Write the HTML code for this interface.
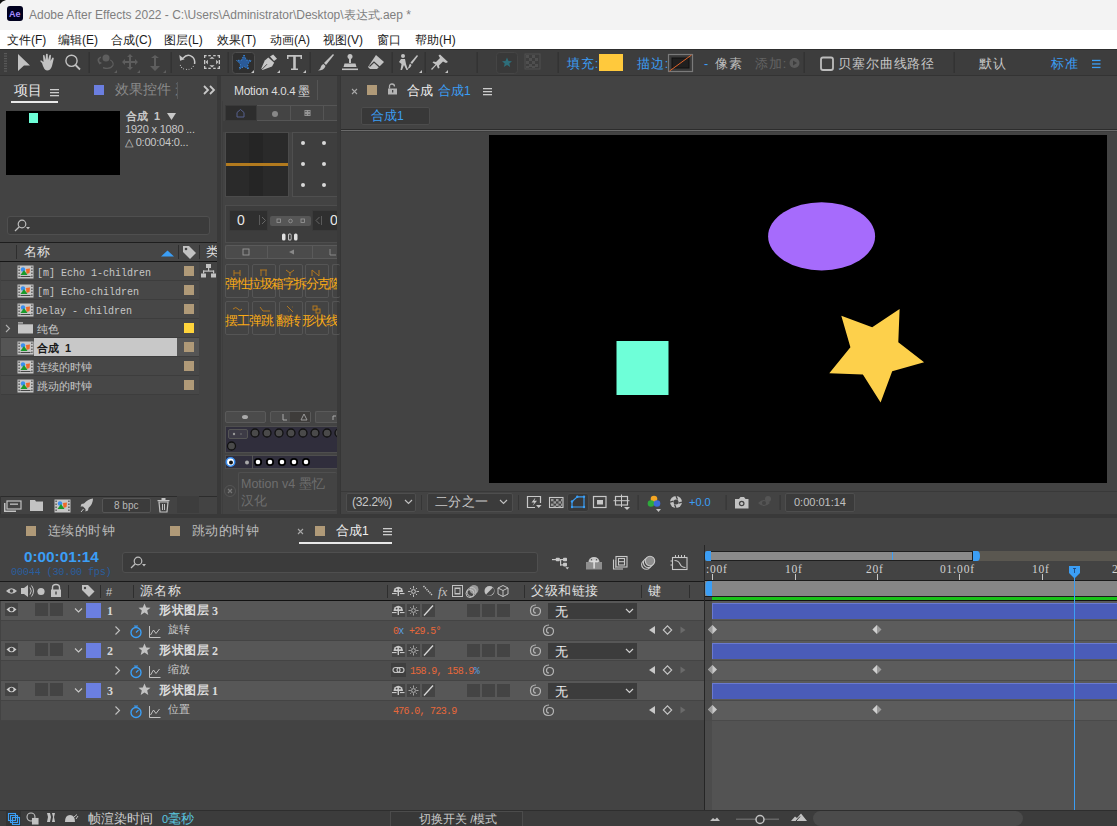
<!DOCTYPE html>
<html><head><meta charset="utf-8">
<style>
*{margin:0;padding:0;box-sizing:border-box}
html,body{width:1117px;height:826px;overflow:hidden;background:#393939;font-family:"Liberation Sans",sans-serif;}
.a{position:absolute}
.t{position:absolute;white-space:nowrap;line-height:1}
</style></head><body>
<!-- title bar -->
<div class="a" style="left:0;top:0;width:1117px;height:30px;background:#f3f3f3"></div>
<div class="a" style="left:7px;top:6px;width:16px;height:15px;background:#00001e;border-radius:3px"></div>
<div class="t" style="left:9px;top:9.5px;font-size:9px;font-weight:bold;color:#a48cff">Ae</div>
<svg class="a" style="left:0;top:0" width="8" height="5"><path d="M0,0 H6 Q2,1 0,4 Z" fill="#111"/></svg>
<div class="t" style="left:29px;top:9px;font-size:12px;color:#7f7f7f">Adobe After Effects 2022 - C:\Users\Administrator\Desktop\表达式.aep *</div>
<!-- menu bar -->
<div class="a" style="left:0;top:30px;width:1117px;height:20px;background:#ffffff"></div>
<div class="t" style="top:34px;left:7px;font-size:12px;color:#1a1a1a">文件(F)</div>
<div class="t" style="top:34px;left:58px;font-size:12px;color:#1a1a1a">编辑(E)</div>
<div class="t" style="top:34px;left:111px;font-size:12px;color:#1a1a1a">合成(C)</div>
<div class="t" style="top:34px;left:164px;font-size:12px;color:#1a1a1a">图层(L)</div>
<div class="t" style="top:34px;left:217px;font-size:12px;color:#1a1a1a">效果(T)</div>
<div class="t" style="top:34px;left:270px;font-size:12px;color:#1a1a1a">动画(A)</div>
<div class="t" style="top:34px;left:323px;font-size:12px;color:#1a1a1a">视图(V)</div>
<div class="t" style="top:34px;left:377px;font-size:12px;color:#1a1a1a">窗口</div>
<div class="t" style="top:34px;left:415px;font-size:12px;color:#1a1a1a">帮助(H)</div>
<!-- toolbar -->
<div class="a" style="left:0;top:49px;width:1117px;height:1px;background:#2e2e2e"></div>
<div class="a" style="left:0;top:50px;width:1117px;height:25px;background:#3d3d3d"></div>
<div class="a" style="left:0;top:75px;width:1117px;height:1px;background:#333"></div>
<svg class="a" style="left:0;top:50px" width="1117" height="26" viewBox="0 50 1117 26">
 <g fill="#5a5a5a"><rect x="4" y="53" width="3" height="1.2"/><rect x="4" y="55.5" width="3" height="1.2"/><rect x="4" y="58" width="3" height="1.2"/><rect x="4" y="60.5" width="3" height="1.2"/><rect x="4" y="63" width="3" height="1.2"/><rect x="4" y="65.5" width="3" height="1.2"/><rect x="4" y="68" width="3" height="1.2"/><rect x="4" y="70.5" width="3" height="1.2"/></g>
 <g fill="#c2c2c2">
  <polygon points="18,54 30,65.5 24,65.5 18,71"/>
  <path d="M42,63 L40.5,61.5 Q40,60.5 41,60.2 L43.5,62 L43,55.5 Q43.5,54.5 44.5,55.2 L45.5,60 L46,54 Q47,53.3 47.7,54 L48,60 L49.5,55 Q50.5,54.5 51,55.5 L50.5,61 L52.5,57.5 Q53.8,57.5 53.8,58.5 L52,66 Q50.5,70.5 47,70.5 Q44,70.5 42,63 Z"/>
 </g>
 <g fill="none" stroke="#c2c2c2" stroke-width="1.4"><circle cx="71.5" cy="60.8" r="5.6"/><line x1="75.5" y1="65" x2="80" y2="69.5" stroke-width="1.8"/></g>
 <g fill="#333"><rect x="88.5" y="52" width="1.5" height="21"/><rect x="170.5" y="52" width="1.5" height="21"/><rect x="227.5" y="52" width="1.5" height="21"/><rect x="309.5" y="52" width="1.5" height="21"/><rect x="391.5" y="52" width="1.5" height="21"/><rect x="424.5" y="52" width="1.5" height="21"/><rect x="476.5" y="52" width="1.5" height="21"/><rect x="557.5" y="52" width="1.5" height="21"/><rect x="803.5" y="52" width="1.5" height="21"/><rect x="953.5" y="52" width="1.5" height="21"/></g>
 <g fill="#5e5e5e" stroke="none">
  <circle cx="106" cy="58" r="3.5"/><path d="M98,62 Q96,58 101,56.5 L101,58 Q98.5,59 99.5,61.5 L102,63 L99.5,64.5 Z M103,67 Q110,69 112.5,65 Q113,62 110,60.5 L110.5,59.5 Q114.5,61.5 113.5,65.5 Q111,70.5 103,68.5 Z"/>
  <path d="M130,54 L133,57 L131,57 L131,61 L135,61 L135,59 L138,62 L135,65 L135,63 L131,63 L131,67 L133,67 L130,70 L127,67 L129,67 L129,63 L125,63 L125,65 L122,62 L125,59 L125,61 L129,61 L129,57 L127,57 Z"/>
  <path d="M155,55 L159,58 L156,58 L156,66 L160,66 L155,71 L150,66 L154,66 L154,58 L151,58 Z"/>
  <path d="M114,73 L117,70 L117,73 Z M137,73 L140,70 L140,73 Z M163,73 L166,70 L166,73 Z"/>
 </g>
 <path d="M183,58.2 Q187.5,53 192.3,56.8 Q195.3,59.5 194.6,64" fill="none" stroke="#c8c8c8" stroke-width="1.5"/>
 <polygon points="179.3,55.1 180.1,60.7 184.6,59.2" fill="#c8c8c8"/>
 <g fill="#b0b0b0"><circle cx="180.4" cy="65.4" r="0.6"/><circle cx="181.6" cy="67.4" r="0.65"/><circle cx="183.5" cy="68.8" r="0.6"/><circle cx="186.5" cy="69.4" r="0.6"/><circle cx="189" cy="69.3" r="0.55"/><circle cx="191.5" cy="68.3" r="0.65"/><circle cx="193.3" cy="66.4" r="0.6"/></g>
 <g fill="#c8c8c8">
  <rect x="204" y="55" width="2.6" height="1.3"/><rect x="204" y="55" width="1.3" height="3"/>
  <rect x="217.4" y="55" width="2.6" height="1.3"/><rect x="218.7" y="55" width="1.3" height="3"/>
  <rect x="204" y="67.7" width="2.6" height="1.3"/><rect x="204" y="66" width="1.3" height="3"/>
  <rect x="217.4" y="67.7" width="2.6" height="1.3"/><rect x="218.7" y="66" width="1.3" height="3"/>
  <rect x="208.3" y="55" width="2.5" height="1.3"/><rect x="213.2" y="55" width="2.5" height="1.3"/>
  <rect x="208.3" y="67.7" width="2.5" height="1.3"/><rect x="213.2" y="67.7" width="2.5" height="1.3"/>
  <rect x="204" y="60" width="1.3" height="4.2"/><rect x="218.7" y="60" width="1.3" height="4.2"/>
  <polygon points="212,56.8 214.6,58.8 209.4,58.8"/><polygon points="212,67.4 214.6,65.2 209.4,65.2"/>
  <polygon points="205.6,62.1 207.9,59.8 207.9,64.4"/><polygon points="218.4,62.1 216.1,59.8 216.1,64.4"/>
 </g>
 <rect x="232.5" y="52.5" width="22" height="21" rx="3" fill="#2f2f2f" stroke="#4d4d4d"/>
 <polygon points="244,55 246.3,60 251.5,60.5 247.5,64 248.7,69.3 244,66.5 239.3,69.3 240.5,64 236.5,60.5 241.7,60" fill="#2a5a98" stroke="#3f9af0" stroke-width="0.9" stroke-dasharray="1.2 1.6"/>
 <path d="M251,73 L254,70 L254,73 Z" fill="#c2c2c2"/>
 <polygon points="270,56.6 273.2,54.4 277,58.8 274,61" fill="#c8c8c8"/><polygon points="268.3,57.6 274.2,62.8 272,66.5 262.5,70 261.3,68.6 264.8,60.5" fill="#c8c8c8"/><path d="M262,69.3 L267,64.2" stroke="#3d3d3d" stroke-width="0.9"/>
 <path d="M277,73 L280,70 L280,73 Z" fill="#c2c2c2"/>
 <path d="M287,55 L302,55 L302,59 L300.5,59 L300.5,56.8 L295.8,56.8 L295.8,68.5 L298,68.5 L298,70 L291,70 L291,68.5 L293.2,68.5 L293.2,56.8 L288.5,56.8 L288.5,59 L287,59 Z" fill="#c2c2c2"/>
 <path d="M303,73 L306,70 L306,73 Z" fill="#c2c2c2"/>
 <g fill="#c2c2c2">
  <path d="M333,54 L334,55 L326,65 L324,63 Z"/><path d="M323.5,64 L325.5,66 Q324,70.5 318,70.5 Q321,68.5 321,66.5 Q321.5,64.5 323.5,64 Z"/>
  <circle cx="350" cy="56.5" r="2.5"/><rect x="349" y="58" width="2" height="5"/><path d="M344.5,63.5 L355.5,63.5 L356.5,67 L343.5,67 Z"/><rect x="342" y="68.5" width="16" height="1.6"/>
  <path d="M376,55 L384,62 L377,69 L370,69 L368,67 Z"/>
 </g>
 <path d="M369.5,66.5 L374,62 L380,67.5" stroke="#3d3d3d" stroke-width="1.2" fill="none"/>
 <g fill="#c2c2c2"><circle cx="403" cy="56" r="2"/><path d="M401,59 L405,59 L406,64 L408,70 L406.5,70 L404,65 L402,70 L400.5,70 L401.5,64 L399,62 Z"/><path d="M417,55 L418,56 L412,64 L410.5,62.5 Z"/><path d="M410,63.5 L411.5,65 Q410.5,68.5 407,69 Q409,67 409,65.5 Z"/>
 <path d="M419,73 L422,70 L422,73 Z"/>
 <path d="M440,54.5 L448,62 L446,63 L443,61.5 L439,65.5 L439.5,68 L438,68.5 L436.5,65 L432,70 L431,69 L435.5,64.5 L432.5,62.5 L433.5,61.5 L436,62 L440,58 L438.5,55.5 Z"/>
 <path d="M445,73 L448,70 L448,73 Z"/></g>
 <rect x="496.5" y="52.5" width="21" height="21" rx="3" fill="#393939" stroke="#454545"/>
 <polygon points="507,57.5 508.5,61 512,61.3 509.3,63.5 510.2,67 507,65 503.8,67 504.7,63.5 502,61.3 505.5,61" fill="#2e6e7a"/>
 <g fill="#4f4f4f"><rect x="525" y="54" width="15" height="15" fill="none" stroke="#505050" stroke-width="1"/>
 <rect x="526" y="55" width="3" height="3"/><rect x="532" y="55" width="3" height="3"/><rect x="529" y="58" width="3" height="3"/><rect x="535" y="58" width="3" height="3"/><rect x="526" y="61" width="3" height="3"/><rect x="532" y="61" width="3" height="3"/><rect x="529" y="64" width="3" height="3"/><rect x="535" y="64" width="3" height="3"/><rect x="526" y="66" width="3" height="2"/><rect x="532" y="66" width="3" height="2"/></g>
 <rect x="599" y="54" width="24" height="17" fill="#ffc93c"/>
 <rect x="668.5" y="54.5" width="24" height="17" fill="#3a3a3a" stroke="#7a7a7a" stroke-width="1.2"/>
 <rect x="672" y="58" width="17" height="10" fill="#1f1f1f" stroke="#101010"/>
 <line x1="669.5" y1="71" x2="691.5" y2="55" stroke="#e0642a" stroke-width="1"/>
 <circle cx="794.5" cy="63" r="5" fill="#5a5a5a"/><path d="M793,60.5 L797,63 L793,65.5 Z" fill="#3d3d3d"/>
 <rect x="821" y="57.5" width="12" height="12.5" rx="2" fill="none" stroke="#bdbdbd" stroke-width="1.8"/>
 <g fill="#3b9ef5"><rect x="1092" y="59.8" width="8.5" height="1.3"/><rect x="1092" y="63.3" width="8.5" height="1.3"/><rect x="1092" y="66.8" width="8.5" height="1.3"/></g>
</svg>
<div class="t" style="left:567px;top:58px;font-size:12.5px;letter-spacing:0.9px;color:#3b9ef5">填充:</div>
<div class="t" style="left:637px;top:58px;font-size:12.5px;letter-spacing:0.9px;color:#3b9ef5">描边:</div>
<div class="t" style="left:704px;top:58px;font-size:12.5px;letter-spacing:0.9px;color:#3b9ef5">-</div>
<div class="t" style="left:715px;top:58px;font-size:12.5px;letter-spacing:0.9px;color:#bdbdbd">像素</div>
<div class="t" style="left:755px;top:58px;font-size:12.5px;letter-spacing:0.9px;color:#636363">添加:</div>
<div class="t" style="left:838px;top:58px;font-size:12.5px;letter-spacing:0.9px;color:#c8c8c8">贝塞尔曲线路径</div>
<div class="t" style="left:979px;top:58px;font-size:12.5px;letter-spacing:0.9px;color:#c8c8c8">默认</div>
<div class="t" style="left:1051px;top:58px;font-size:12.5px;letter-spacing:0.9px;color:#3b9ef5">标准</div>

<!-- project panel -->
<div class="a" style="left:0;top:76px;width:217px;height:438px;background:#434343"></div>
<div class="t" style="left:14px;top:83px;font-size:14px;color:#e8e8e8">项目</div>
<svg class="a" style="left:50px;top:88px" width="9" height="9"><rect y="1" width="9" height="1.3" fill="#ccc"/><rect y="4" width="9" height="1.3" fill="#ccc"/><rect y="7" width="9" height="1.3" fill="#ccc"/></svg>
<div class="a" style="left:11px;top:101px;width:47px;height:2px;background:#e8e8e8"></div>
<div class="a" style="left:94px;top:85px;width:10px;height:10px;background:#6b7ee0"></div>
<div class="a" style="left:115px;top:83px;width:62px;height:16px;overflow:hidden"><div class="t" style="left:0;top:0;font-size:13.5px;color:#8a8a8a">效果控件 形状</div></div>
<div class="a" style="left:177px;top:82px;width:1px;height:17px;background:#5a5a5a"></div>
<svg class="a" style="left:202px;top:85px" width="14" height="10"><path d="M2,1 L6,5 L2,9 M8,1 L12,5 L8,9" stroke="#c8c8c8" stroke-width="1.8" fill="none"/></svg>
<div class="a" style="left:6px;top:111px;width:114px;height:64px;background:#000"></div>
<div class="a" style="left:29px;top:113px;width:9px;height:10px;background:#6effd8"></div>
<div class="t" style="left:126px;top:111px;font-size:11px;font-weight:bold;color:#c8c8c8">合成 &nbsp;1</div>
<svg class="a" style="left:167px;top:113px" width="9" height="7"><polygon points="0,0 9,0 4.5,7" fill="#c8c8c8"/></svg>
<div class="t" style="left:125px;top:124px;font-size:11px;color:#c8c8c8;letter-spacing:-0.2px">1920 x 1080 ...</div>
<div class="t" style="left:125px;top:137px;font-size:11px;color:#c8c8c8;letter-spacing:-0.2px">△ 0:00:04:0...</div>
<div class="a" style="left:7px;top:216px;width:203px;height:19px;background:#3b3b3b;border:1px solid #4f4f4f;border-radius:3px"></div>
<svg class="a" style="left:13px;top:219px" width="20" height="14"><circle cx="9" cy="5" r="3.8" stroke="#bdbdbd" stroke-width="1.2" fill="none"/><line x1="6.3" y1="7.8" x2="2" y2="12" stroke="#bdbdbd" stroke-width="1.3"/><polygon points="13,8 17,8 15,10.5" fill="#bdbdbd"/></svg>
<div class="a" style="left:0;top:242px;width:217px;height:1px;background:#1e1e1e"></div>
<div class="a" style="left:0;top:243px;width:199px;height:18px;background:#464646"></div>
<div class="a" style="left:16px;top:245px;width:1px;height:14px;background:#2e2e2e"></div>
<div class="t" style="left:24px;top:245px;font-size:13px;color:#e0e0e0">名称</div>
<svg class="a" style="left:161px;top:250px" width="13" height="7"><polygon points="0,6.5 6.5,0.5 13,6.5" fill="#3b9ef5"/></svg>
<div class="a" style="left:178px;top:245px;width:1px;height:14px;background:#2e2e2e"></div>
<svg class="a" style="left:182px;top:245px" width="15" height="14"><path d="M1,1 L7,1 L14,8 L8,14 L1,7 Z" fill="#c2c2c2"/><circle cx="4" cy="4" r="1.3" fill="#464646"/></svg>
<div class="a" style="left:199px;top:245px;width:1px;height:14px;background:#2e2e2e"></div>
<div class="a" style="left:203px;top:244px;width:14px;height:17px;overflow:hidden"><div class="t" style="left:3px;top:1px;font-size:13px;color:#e0e0e0">类型</div></div>
<div class="a" style="left:0;top:261px;width:217px;height:1px;background:#161616"></div>
<div class="a" style="left:1px;top:262px;width:198px;height:133px;background:#3d3d3d"></div>
<div class="a" style="left:1px;top:262px;width:198px;height:18px;background:#474747"></div>
<svg class="a" style="left:17px;top:265px" width="17" height="14" viewBox="0 0 17 14"><rect x="0.5" y="0.5" width="16" height="13" fill="#c6c6c6"/><g fill="#454545"><rect x="1.5" y="1.5" width="1.2" height="1.5"/><rect x="1.5" y="4.5" width="1.2" height="1.5"/><rect x="1.5" y="7.5" width="1.2" height="1.5"/><rect x="1.5" y="10.5" width="1.2" height="1.5"/><rect x="14.3" y="1.5" width="1.2" height="1.5"/><rect x="14.3" y="4.5" width="1.2" height="1.5"/><rect x="14.3" y="7.5" width="1.2" height="1.5"/><rect x="14.3" y="10.5" width="1.2" height="1.5"/><rect x="3.5" y="11" width="10" height="1"/></g><polygon points="9,4 13,3.5 12.5,8 9.5,9" fill="#f06a2a"/><circle cx="6" cy="4.5" r="2.2" fill="#3a8ef0"/><polygon points="7,5 10.5,10 3.5,10" fill="#1a9a2a"/></svg>
<div class="a" style="left:184px;top:266px;width:10px;height:10px;background:#b09a78"></div>
<div class="t" style="left:37px;top:269px;font-family:'Liberation Mono',monospace;font-size:10px;color:#c8c8c8">[m] Echo 1-children</div>
<div class="a" style="left:1px;top:281px;width:198px;height:18px;background:#474747"></div>
<svg class="a" style="left:17px;top:284px" width="17" height="14" viewBox="0 0 17 14"><rect x="0.5" y="0.5" width="16" height="13" fill="#c6c6c6"/><g fill="#454545"><rect x="1.5" y="1.5" width="1.2" height="1.5"/><rect x="1.5" y="4.5" width="1.2" height="1.5"/><rect x="1.5" y="7.5" width="1.2" height="1.5"/><rect x="1.5" y="10.5" width="1.2" height="1.5"/><rect x="14.3" y="1.5" width="1.2" height="1.5"/><rect x="14.3" y="4.5" width="1.2" height="1.5"/><rect x="14.3" y="7.5" width="1.2" height="1.5"/><rect x="14.3" y="10.5" width="1.2" height="1.5"/><rect x="3.5" y="11" width="10" height="1"/></g><polygon points="9,4 13,3.5 12.5,8 9.5,9" fill="#f06a2a"/><circle cx="6" cy="4.5" r="2.2" fill="#3a8ef0"/><polygon points="7,5 10.5,10 3.5,10" fill="#1a9a2a"/></svg>
<div class="a" style="left:184px;top:285px;width:10px;height:10px;background:#b09a78"></div>
<div class="t" style="left:37px;top:288px;font-family:'Liberation Mono',monospace;font-size:10px;color:#c8c8c8">[m] Echo-children</div>
<div class="a" style="left:1px;top:300px;width:198px;height:18px;background:#474747"></div>
<svg class="a" style="left:17px;top:303px" width="17" height="14" viewBox="0 0 17 14"><rect x="0.5" y="0.5" width="16" height="13" fill="#c6c6c6"/><g fill="#454545"><rect x="1.5" y="1.5" width="1.2" height="1.5"/><rect x="1.5" y="4.5" width="1.2" height="1.5"/><rect x="1.5" y="7.5" width="1.2" height="1.5"/><rect x="1.5" y="10.5" width="1.2" height="1.5"/><rect x="14.3" y="1.5" width="1.2" height="1.5"/><rect x="14.3" y="4.5" width="1.2" height="1.5"/><rect x="14.3" y="7.5" width="1.2" height="1.5"/><rect x="14.3" y="10.5" width="1.2" height="1.5"/><rect x="3.5" y="11" width="10" height="1"/></g><polygon points="9,4 13,3.5 12.5,8 9.5,9" fill="#f06a2a"/><circle cx="6" cy="4.5" r="2.2" fill="#3a8ef0"/><polygon points="7,5 10.5,10 3.5,10" fill="#1a9a2a"/></svg>
<div class="a" style="left:184px;top:304px;width:10px;height:10px;background:#b09a78"></div>
<div class="t" style="left:36px;top:307px;font-family:'Liberation Mono',monospace;font-size:10px;color:#c8c8c8">Delay - children</div>
<div class="a" style="left:1px;top:319px;width:198px;height:18px;background:#474747"></div>
<svg class="a" style="left:4px;top:322px" width="30" height="14" viewBox="0 0 30 14"><path d="M2,3 L5.5,6.5 L2,10" stroke="#b0b0b0" stroke-width="1.1" fill="none"/><rect x="14" y="0.3" width="5" height="1.2" fill="#c6c6c6"/><rect x="14" y="2.3" width="15" height="9.2" fill="#c6c6c6"/></svg>
<div class="a" style="left:184px;top:323px;width:10px;height:10px;background:#ffd43b"></div>
<div class="t" style="left:37px;top:324px;font-size:11px;color:#c8c8c8">纯色</div>
<div class="a" style="left:1px;top:338px;width:198px;height:18px;background:#555"></div>
<div class="a" style="left:34px;top:338px;width:143px;height:18px;background:#c8c8c8"></div>
<svg class="a" style="left:17px;top:341px" width="17" height="14" viewBox="0 0 17 14"><rect x="0.5" y="0.5" width="16" height="13" fill="#c6c6c6"/><g fill="#454545"><rect x="1.5" y="1.5" width="1.2" height="1.5"/><rect x="1.5" y="4.5" width="1.2" height="1.5"/><rect x="1.5" y="7.5" width="1.2" height="1.5"/><rect x="1.5" y="10.5" width="1.2" height="1.5"/><rect x="14.3" y="1.5" width="1.2" height="1.5"/><rect x="14.3" y="4.5" width="1.2" height="1.5"/><rect x="14.3" y="7.5" width="1.2" height="1.5"/><rect x="14.3" y="10.5" width="1.2" height="1.5"/><rect x="3.5" y="11" width="10" height="1"/></g><polygon points="9,4 13,3.5 12.5,8 9.5,9" fill="#f06a2a"/><circle cx="6" cy="4.5" r="2.2" fill="#3a8ef0"/><polygon points="7,5 10.5,10 3.5,10" fill="#1a9a2a"/></svg>
<div class="a" style="left:184px;top:342px;width:10px;height:10px;background:#b09a78"></div>
<div class="t" style="left:37px;top:343px;font-size:11px;font-weight:bold;color:#1a1a1a">合成&nbsp;&nbsp;1</div>
<div class="a" style="left:1px;top:357px;width:198px;height:18px;background:#474747"></div>
<svg class="a" style="left:17px;top:360px" width="17" height="14" viewBox="0 0 17 14"><rect x="0.5" y="0.5" width="16" height="13" fill="#c6c6c6"/><g fill="#454545"><rect x="1.5" y="1.5" width="1.2" height="1.5"/><rect x="1.5" y="4.5" width="1.2" height="1.5"/><rect x="1.5" y="7.5" width="1.2" height="1.5"/><rect x="1.5" y="10.5" width="1.2" height="1.5"/><rect x="14.3" y="1.5" width="1.2" height="1.5"/><rect x="14.3" y="4.5" width="1.2" height="1.5"/><rect x="14.3" y="7.5" width="1.2" height="1.5"/><rect x="14.3" y="10.5" width="1.2" height="1.5"/><rect x="3.5" y="11" width="10" height="1"/></g><polygon points="9,4 13,3.5 12.5,8 9.5,9" fill="#f06a2a"/><circle cx="6" cy="4.5" r="2.2" fill="#3a8ef0"/><polygon points="7,5 10.5,10 3.5,10" fill="#1a9a2a"/></svg>
<div class="a" style="left:184px;top:361px;width:10px;height:10px;background:#b09a78"></div>
<div class="t" style="left:37px;top:362px;font-size:11px;color:#c8c8c8">连续的时钟</div>
<div class="a" style="left:1px;top:376px;width:198px;height:18px;background:#474747"></div>
<svg class="a" style="left:17px;top:379px" width="17" height="14" viewBox="0 0 17 14"><rect x="0.5" y="0.5" width="16" height="13" fill="#c6c6c6"/><g fill="#454545"><rect x="1.5" y="1.5" width="1.2" height="1.5"/><rect x="1.5" y="4.5" width="1.2" height="1.5"/><rect x="1.5" y="7.5" width="1.2" height="1.5"/><rect x="1.5" y="10.5" width="1.2" height="1.5"/><rect x="14.3" y="1.5" width="1.2" height="1.5"/><rect x="14.3" y="4.5" width="1.2" height="1.5"/><rect x="14.3" y="7.5" width="1.2" height="1.5"/><rect x="14.3" y="10.5" width="1.2" height="1.5"/><rect x="3.5" y="11" width="10" height="1"/></g><polygon points="9,4 13,3.5 12.5,8 9.5,9" fill="#f06a2a"/><circle cx="6" cy="4.5" r="2.2" fill="#3a8ef0"/><polygon points="7,5 10.5,10 3.5,10" fill="#1a9a2a"/></svg>
<div class="a" style="left:184px;top:380px;width:10px;height:10px;background:#b09a78"></div>
<div class="t" style="left:37px;top:381px;font-size:11px;color:#c8c8c8">跳动的时钟</div>

<svg class="a" style="left:201px;top:264px" width="15" height="14"><rect x="5" y="0" width="5" height="4" fill="#c2c2c2"/><rect x="7" y="4" width="1.2" height="3" fill="#c2c2c2"/><rect x="2" y="6.5" width="11" height="1.2" fill="#c2c2c2"/><rect x="2" y="6.5" width="1.2" height="3" fill="#c2c2c2"/><rect x="12" y="6.5" width="1.2" height="3" fill="#c2c2c2"/><rect x="0" y="9.5" width="5" height="4" fill="#c2c2c2"/><rect x="10" y="9.5" width="5" height="4" fill="#c2c2c2"/></svg>
<div class="a" style="left:0;top:496px;width:217px;height:1px;background:#2c2c2c"></div>
<div class="a" style="left:177px;top:496px;width:22px;height:17px;background:#3d3d3d"></div>
<svg class="a" style="left:0;top:497px" width="217" height="17">
 <g fill="#c2c2c2"><rect x="7" y="4" width="14" height="8" fill="none" stroke="#c2c2c2" stroke-width="1.2"/><rect x="10" y="6.5" width="8" height="1.3"/><rect x="4" y="6" width="1.5" height="9"/><rect x="4" y="13.5" width="12" height="1.5"/>
 <path d="M30,3 L35,3 L36,4.5 L43,4.5 L43,14 L30,14 Z"/></g>
</svg>
<svg class="a" style="left:54px;top:499px" width="17" height="14" viewBox="0 0 17 14"><rect x="0.5" y="0.5" width="16" height="13" fill="#c6c6c6"/><g fill="#454545"><rect x="1.5" y="1.5" width="1.2" height="1.5"/><rect x="1.5" y="4.5" width="1.2" height="1.5"/><rect x="1.5" y="7.5" width="1.2" height="1.5"/><rect x="1.5" y="10.5" width="1.2" height="1.5"/><rect x="14.3" y="1.5" width="1.2" height="1.5"/><rect x="14.3" y="4.5" width="1.2" height="1.5"/><rect x="14.3" y="7.5" width="1.2" height="1.5"/><rect x="14.3" y="10.5" width="1.2" height="1.5"/></g><polygon points="9,4 13,3.5 12.5,8 9.5,9" fill="#f06a2a"/><circle cx="6" cy="4.5" r="2.2" fill="#3a8ef0"/><polygon points="7,5 10.5,10 3.5,10" fill="#1a9a2a"/></svg>
<svg class="a" style="left:80px;top:498px" width="14" height="15"><path d="M13,0.5 Q8,1 4,5.5 L1.5,6 L0.5,8.5 L3,8.5 L5.5,11 L5.5,13.5 L8,12.5 L8.5,10 Q13,6 13,0.5 Z" fill="#c2c2c2"/><path d="M3.5,11 L1,14" stroke="#c2c2c2" stroke-width="1"/></svg>
<div class="a" style="left:102px;top:498px;width:49px;height:15px;background:#3b3b3b;border:1px solid #555;border-radius:2px"></div>
<div class="t" style="left:114px;top:501px;font-size:10px;color:#b8b8b8">8 bpc</div>
<svg class="a" style="left:157px;top:498px" width="13" height="15"><rect x="0.5" y="2" width="12" height="1.3" fill="#c2c2c2"/><rect x="4.5" y="0" width="4" height="2" fill="#c2c2c2"/><path d="M2,4 L11,4 L10,14 L3,14 Z" fill="none" stroke="#c2c2c2" stroke-width="1.2"/><rect x="5" y="6" width="1" height="6" fill="#c2c2c2"/><rect x="7" y="6" width="1" height="6" fill="#c2c2c2"/></svg>
<div class="a" style="left:0;top:496px;width:1px;height:18px;background:#333"></div>

<!-- motion panel -->
<div class="a" style="left:221px;top:76px;width:116px;height:438px;background:#434343"></div>
<div class="a" style="left:337px;top:76px;width:4px;height:438px;background:#3a3a3a"></div>
<div class="t" style="left:234px;top:85px;font-size:12px;color:#dcdcdc;letter-spacing:-0.3px">Motion <span style="font-size:11.5px">4.0.4</span> 墨</div>
<div class="a" style="left:317px;top:80px;width:1px;height:20px;background:#555"></div>
<div class="a" style="left:222px;top:101px;width:115px;height:413px;border-left:1px solid #3e3e3e"></div>
<div class="a" style="left:225px;top:105px;width:112px;height:16px;background:#444;border:1px solid #555;border-right:none"></div>
<div class="a" style="left:225px;top:105px;width:32px;height:16px;background:#2d2d2d;border:1px solid #3a3a3a"></div>
<div class="a" style="left:290px;top:105px;width:1px;height:16px;background:#555"></div>
<div class="a" style="left:323px;top:105px;width:1px;height:16px;background:#555"></div>
<svg class="a" style="left:225px;top:105px" width="112" height="16"><path d="M12,12 L12,7.5 L15.5,4.5 L19,7.5 L19,12 Z" fill="none" stroke="#56608e" stroke-width="1"/><circle cx="50" cy="9" r="3" fill="#888"/><rect x="79.5" y="5" width="6" height="6" fill="#999"/><g fill="#444"><circle cx="81" cy="6.5" r="0.7"/><circle cx="84" cy="6.5" r="0.7"/><circle cx="81" cy="9.5" r="0.7"/><circle cx="84" cy="9.5" r="0.7"/></g></svg>
<div class="a" style="left:223px;top:121px;width:114px;height:11px;background:#3d3d3d"></div>
<div class="a" style="left:225px;top:132px;width:64px;height:65px;background:#2a2a2a;border:1px solid #4b4b4b"></div>
<div class="a" style="left:249px;top:133px;width:14px;height:63px;background:#252525"></div>
<div class="a" style="left:226px;top:163px;width:62px;height:3px;background:#b27a1e"></div>
<div class="a" style="left:292px;top:132px;width:45px;height:65px;background:#3e3e3e;border:1px solid #4f4f4f;border-right:none"></div>
<svg class="a" style="left:292px;top:132px" width="45" height="65"><g fill="#d8d8d8"><circle cx="11" cy="11" r="2"/><circle cx="32" cy="11" r="2"/><circle cx="11" cy="32" r="2"/><circle cx="32" cy="32" r="2"/><circle cx="11" cy="53" r="2"/><circle cx="32" cy="53" r="2"/></g></svg>
<div class="a" style="left:225px;top:205px;width:112px;height:38px;background:#3d3d3d;border:1px solid #4d4d4d;border-right:none"></div>
<div class="a" style="left:229px;top:210px;width:39px;height:21px;background:#2f2f2f;border:1px solid #3a3a3a"></div>
<div class="t" style="left:237px;top:213px;font-size:14px;color:#e8e8e8">0</div>
<div class="a" style="left:259px;top:215px;width:1px;height:10px;background:#5a5a5a"></div>
<svg class="a" style="left:261px;top:216px" width="6" height="9"><path d="M1,1 L4.5,4.5 L1,8" stroke="#666" fill="none"/></svg>
<div class="a" style="left:270px;top:216px;width:41px;height:10px;background:#565656;border-radius:2px"></div>
<svg class="a" style="left:270px;top:216px" width="41" height="10"><g fill="none" stroke="#999" stroke-width="0.8"><rect x="7" y="3" width="3.5" height="3.5"/><circle cx="20.5" cy="5" r="1.8"/><rect x="31" y="3" width="3.5" height="3.5"/></g></svg>
<div class="a" style="left:312px;top:210px;width:25px;height:21px;background:#2f2f2f;border:1px solid #3a3a3a;border-right:none"></div>
<svg class="a" style="left:315px;top:216px" width="8" height="9"><path d="M4.5,1 L1,4.5 L4.5,8" stroke="#666" fill="none"/><path d="M6.5,0 V9" stroke="#5a5a5a"/></svg>
<div class="a" style="left:330px;top:210px;width:7px;height:21px;overflow:hidden"><div class="t" style="left:0;top:3px;font-size:14px;color:#e8e8e8">0</div></div>
<svg class="a" style="left:281px;top:233px" width="18" height="8"><g fill="#e0e0e0"><rect x="1" y="0.5" width="3.5" height="7" rx="1.5"/><rect x="7" y="0.5" width="3.5" height="7" rx="1.5"/><rect x="13" y="0.5" width="3.5" height="7" rx="1.5"/></g><rect x="7.8" y="1.5" width="2" height="5" fill="#444"/></svg>
<div class="a" style="left:225px;top:245px;width:112px;height:14px;background:#4b4b4b;border:1px solid #5a5a5a;border-right:none;border-radius:2px 0 0 2px"></div>
<div class="a" style="left:267px;top:245px;width:1px;height:14px;background:#5a5a5a"></div>
<div class="a" style="left:312px;top:245px;width:1px;height:14px;background:#5a5a5a"></div>
<svg class="a" style="left:225px;top:245px" width="112" height="14"><rect x="18" y="4" width="6" height="6" fill="none" stroke="#999" stroke-width="0.9"/><path d="M64,7 L69,4.5 L69,9.5 Z" fill="#888"/><path d="M105,4 V10 H111" stroke="#888" fill="none"/></svg>
<div class="a" style="left:225px;top:264px;width:24px;height:34px;border:1px solid #555;border-radius:2px;"></div>
<div class="a" style="left:252px;top:264px;width:24px;height:34px;border:1px solid #555;border-radius:2px;"></div>
<div class="a" style="left:279px;top:264px;width:24px;height:34px;border:1px solid #555;border-radius:2px;"></div>
<div class="a" style="left:305px;top:264px;width:24px;height:34px;border:1px solid #555;border-radius:2px;"></div>
<div class="a" style="left:332px;top:264px;width:8px;height:34px;border:1px solid #555;border-radius:2px;border-right:none;"></div>
<div class="a" style="left:225px;top:301px;width:24px;height:34px;border:1px solid #555;border-radius:2px;"></div>
<div class="a" style="left:252px;top:301px;width:24px;height:34px;border:1px solid #555;border-radius:2px;"></div>
<div class="a" style="left:279px;top:301px;width:24px;height:34px;border:1px solid #555;border-radius:2px;"></div>
<div class="a" style="left:305px;top:301px;width:24px;height:34px;border:1px solid #555;border-radius:2px;"></div>
<div class="a" style="left:332px;top:301px;width:8px;height:34px;border:1px solid #555;border-radius:2px;border-right:none;"></div>
<svg class="a" style="left:225px;top:264px" width="112" height="75"><g fill="none" stroke="#b4781e" stroke-width="1"><path d="M9,6 V12 M15,6 V12 M9,9 H15"/><path d="M35,6 H42 M36,6 V12 M41,6 V12"/><path d="M61,6 L65,9 L69,6 M65,9 V12"/><path d="M87,6 V12 M94,6 V12 M87,6 L94,12"/><path d="M8,45 Q11,42 13,45 Q15,48 17,45"/><path d="M35,43 L38,47 L45,47"/><path d="M62,42 L68,48 M63,47 H63.5 M67,43 H67.5"/><rect x="88" y="42" width="4" height="4"/><rect x="91" y="45" width="4" height="4"/></g></svg>
<div class="a" style="left:225px;top:276px;width:112px;height:16px;overflow:hidden"><div class="t" style="left:0;top:1px;font-size:13px;color:#fbab14;letter-spacing:-1.5px">弹性拉圾箱字拆分克隆复制</div></div>
<div class="a" style="left:225px;top:313px;width:112px;height:16px;overflow:hidden"><div class="t" style="left:0;top:1px;font-size:13px;color:#fbab14;letter-spacing:-1px">摆工弹跳 翻转 形状线</div></div>
<div class="a" style="left:225px;top:411px;width:41px;height:12px;background:#4b4b4b;border:1px solid #5a5a5a;border-radius:2px"></div>
<div class="a" style="left:270px;top:411px;width:41px;height:12px;background:#4b4b4b;border:1px solid #5a5a5a;border-radius:2px"></div>
<div class="a" style="left:290px;top:412px;width:20px;height:10px;background:#3e3c3a"></div>
<div class="a" style="left:315px;top:411px;width:22px;height:12px;background:#4b4b4b;border:1px solid #5a5a5a;border-right:none;border-radius:2px 0 0 2px"></div>
<svg class="a" style="left:225px;top:411px" width="112" height="12"><ellipse cx="20" cy="6" rx="3" ry="2" fill="#aaa"/><path d="M58,3 V9 H62" stroke="#aaa" fill="none"/><path d="M76,9 L79,3 L82,9 Z" fill="none" stroke="#999"/><path d="M108,9 V5 H111" stroke="#aaa" fill="none"/></svg>
<div class="a" style="left:225px;top:426px;width:112px;height:27px;background:#302e3c;border:1px solid #4e4e4e;border-right:none"></div>
<svg class="a" style="left:225px;top:426px" width="112" height="27"><rect x="3.5" y="3.5" width="19" height="9" rx="1.5" fill="#3d3b46" stroke="#555"/><circle cx="9" cy="8" r="1.2" fill="#999"/><circle cx="16" cy="8" r="0.8" fill="#777"/><g fill="#4a4a4a" stroke="#111" stroke-width="1.3"><circle cx="30" cy="7" r="4"/><circle cx="42" cy="7" r="4"/><circle cx="54" cy="7" r="4"/><circle cx="66" cy="7" r="4"/><circle cx="78" cy="7" r="4"/><circle cx="90" cy="7" r="4"/><circle cx="102" cy="7" r="4"/><circle cx="114" cy="7" r="4"/><circle cx="6.5" cy="20" r="4"/></g></svg>
<div class="a" style="left:225px;top:455px;width:112px;height:14px;background:#302e3c;border:1px solid #4e4e4e;border-right:none"></div>
<div class="a" style="left:252px;top:455px;width:1px;height:14px;background:#555"></div>
<svg class="a" style="left:225px;top:455px" width="112" height="14"><circle cx="5.5" cy="7" r="4.2" fill="#fff" stroke="#3a8ef0" stroke-width="1.6"/><circle cx="6" cy="7.5" r="2" fill="#111"/><circle cx="22" cy="7.5" r="2" fill="#aaa"/><g fill="#fff" stroke="#000" stroke-width="1.8"><circle cx="33" cy="7" r="3.2"/><circle cx="45" cy="7" r="3.2"/><circle cx="57" cy="7" r="3.2"/><circle cx="69" cy="7" r="3.2"/><circle cx="81" cy="7" r="3.2"/></g></svg>
<div class="a" style="left:238px;top:472px;width:99px;height:39px;border:1px solid #4f4f4f;border-right:none;border-radius:2px"></div>
<div class="t" style="left:241px;top:476px;font-size:12.5px;color:#6e6e6e;line-height:17px;white-space:normal;width:95px">Motion v4 墨忆 汉化</div>
<svg class="a" style="left:223px;top:484px" width="14" height="14"><circle cx="7" cy="7" r="5.5" fill="none" stroke="#555" stroke-width="1"/><path d="M5,5 L9,9 M9,5 L5,9" stroke="#777" stroke-width="1.2"/></svg>

<!-- comp panel -->
<div class="a" style="left:341px;top:76px;width:776px;height:438px;background:#434343"></div>
<div class="a" style="left:340px;top:76px;width:1px;height:438px;background:#363636"></div>
<svg class="a" style="left:350px;top:86px" width="10" height="10"><path d="M2,3 L7,8 M7,3 L2,8" stroke="#a8a8a8" stroke-width="1.1"/></svg>
<div class="a" style="left:367px;top:85px;width:10px;height:10px;background:#b09a78"></div>
<svg class="a" style="left:387px;top:83px" width="11" height="12"><path d="M2.5,5.5 V3.5 Q2.5,1 5,1 Q7.5,1 7.5,3.5" stroke="#b4b4b4" stroke-width="1.3" fill="none"/><rect x="1" y="5.5" width="9" height="6" fill="#b4b4b4"/><rect x="5" y="7" width="1.3" height="2.5" fill="#434343"/></svg>
<div class="t" style="left:407px;top:84px;font-size:13px;color:#f0f0f0">合成</div>
<div class="t" style="left:438px;top:84px;font-size:13px;color:#3b9ef5">合成<span style="font-size:12px">1</span></div>
<svg class="a" style="left:483px;top:87px" width="9" height="9"><rect y="1" width="9" height="1.3" fill="#ccc"/><rect y="4" width="9" height="1.3" fill="#ccc"/><rect y="7" width="9" height="1.3" fill="#ccc"/></svg>
<div class="a" style="left:361px;top:107px;width:69px;height:18px;background:#383838;border:1px solid #4c4c4c;border-radius:2px"></div>
<div class="t" style="left:371px;top:109px;font-size:13px;color:#3b9ef5">合成<span style="font-size:12px">1</span></div>
<div class="a" style="left:341px;top:129px;width:776px;height:1px;background:#2c2c2c"></div>
<div class="a" style="left:341px;top:130px;width:776px;height:1px;background:#6a6a6a"></div>
<div class="a" style="left:341px;top:131px;width:776px;height:1px;background:#3c3c3c"></div>
<div class="a" style="left:489px;top:135px;width:618px;height:348px;background:#000"></div>
<svg class="a" style="left:489px;top:135px" width="618" height="348" viewBox="489 135 618 348">
 <ellipse cx="821.6" cy="236.3" rx="53.5" ry="34.1" fill="#a66bfc"/>
 <rect x="616.5" y="341" width="52" height="54" fill="#6effd8"/>
 <polygon points="841.3,315.7 872.2,327.3 899.6,309.1 898.3,342.3 924.1,362.3 892.2,371.2 880.6,402.5 862.9,374.6 829.3,373.2 850.4,347.3" fill="#fdd04b"/>
</svg>
<div class="a" style="left:341px;top:491px;width:776px;height:1px;background:#393939"></div>
<div class="a" style="left:346px;top:493px;width:70px;height:19px;background:#3b3b3b;border:1px solid #4e4e4e;border-radius:2px"></div>
<div class="t" style="left:352px;top:496px;font-size:12px;color:#c8c8c8;letter-spacing:-0.3px">(32.2%)</div>
<svg class="a" style="left:404px;top:499px" width="9" height="6"><path d="M1,1 L4.5,4.5 L8,1" stroke="#c0c0c0" stroke-width="1.2" fill="none"/></svg>
<div class="a" style="left:421px;top:495px;width:1px;height:15px;background:#363636"></div>
<div class="a" style="left:427px;top:493px;width:86px;height:19px;background:#3b3b3b;border:1px solid #4e4e4e;border-radius:2px"></div>
<div class="t" style="left:435px;top:496px;font-size:12.5px;color:#c8c8c8;letter-spacing:0.3px">二分之一</div>
<svg class="a" style="left:499px;top:499px" width="9" height="6"><path d="M1,1 L4.5,4.5 L8,1" stroke="#c0c0c0" stroke-width="1.2" fill="none"/></svg>
<div class="a" style="left:518px;top:495px;width:1px;height:15px;background:#363636"></div>
<div class="a" style="left:567px;top:493px;width:22px;height:19px;background:#383838;border:1px solid #4a4a4a;border-radius:3px"></div>
<svg class="a" style="left:520px;top:491px" width="120" height="23" viewBox="520 491 120 23">
 <g fill="none" stroke="#c8c8c8" stroke-width="1.2">
  <path d="M540.5,503 V496.5 H527.5 V507.5 H535"/>
  <rect x="549.5" y="497.5" width="13.5" height="10" stroke-width="1.1"/>
  <rect x="593.5" y="496.5" width="12.5" height="11"/>
  <rect x="615.5" y="496.5" width="12" height="8.5"/><path d="M621.5,494.5 V507 M613.5,500.7 H629.5" stroke-width="1"/>
 </g>
 <path d="M535.5,497.5 L531.5,502.5 H534.3 L532.5,506 L537,500.8 H534.3 Z" fill="#c8c8c8"/>
 <path d="M536,505 L541.5,505 L538.75,508 Z M624,507 L630,507 L627,510 Z" fill="#c8c8c8"/>
 <g fill="#9a9a9a"><rect x="551" y="499" width="2.5" height="2.3"/><rect x="556" y="499" width="2.5" height="2.3"/><rect x="561" y="499" width="1.5" height="2.3"/><rect x="553.5" y="501.3" width="2.5" height="2.3"/><rect x="558.5" y="501.3" width="2.5" height="2.3"/><rect x="551" y="503.6" width="2.5" height="2.3"/><rect x="556" y="503.6" width="2.5" height="2.3"/><rect x="561" y="503.6" width="1.5" height="2.3"/><rect x="553.5" y="505.6" width="2.5" height="1.5"/><rect x="558.5" y="505.6" width="2.5" height="1.5"/></g>
 <rect x="597" y="500" width="6" height="4.5" fill="#c8c8c8"/>
 <path d="M577.3,496.8 L584,496.8 L584,507 L572,507 L572,501.5 Z" fill="none" stroke="#3b9ef5" stroke-width="1.2"/>
 <g fill="#3b9ef5"><circle cx="577.3" cy="496.8" r="1.2"/><circle cx="584" cy="496.8" r="1.2"/><circle cx="584" cy="507" r="1.2"/><circle cx="572" cy="507" r="1.2"/><circle cx="572" cy="501.5" r="1.2"/></g>
 <rect x="637.5" y="495" width="1.2" height="15" fill="#363636"/>
</svg>
<svg class="a" style="left:640px;top:491px" width="240" height="23" viewBox="640 491 240 23">
 <circle cx="654" cy="499" r="3.3" fill="#f5a623"/><circle cx="651" cy="503.5" r="3.3" fill="#2eaa3c"/><circle cx="657" cy="503.5" r="3.3" fill="#3a6ad8"/>
 <path d="M656,509 L661,509 L658.5,512 Z" fill="#c2c2c2"/>
 <circle cx="676" cy="502" r="6" fill="#c2c2c2"/><circle cx="676" cy="502" r="2.5" fill="#434343"/>
 <path d="M676,496 L677.5,499.5 M682,502 L678.5,503 M676,508 L674.5,504.5 M670,502 L673.5,501" stroke="#434343" stroke-width="1.3"/>
 <rect x="725.5" y="495" width="1.2" height="15" fill="#363636"/>
 <path d="M735,499 H739 L740.5,497 H744 L745.5,499 H748.5 V508.5 H735 Z" fill="#c2c2c2"/><circle cx="741.7" cy="503.5" r="2.8" fill="#434343"/><circle cx="741.7" cy="503.5" r="1.5" fill="#c2c2c2"/>
 <path d="M758,503 Q764,497 770,503 Q764,509 758,503 Z" fill="#555"/><circle cx="764" cy="503" r="2" fill="#434343"/><circle cx="768" cy="499" r="3" fill="#555"/>
 <rect x="779.5" y="495" width="1.2" height="15" fill="#363636"/>
</svg>
<div class="t" style="left:689px;top:497px;font-size:11px;color:#3b9ef5">+0.0</div>
<div class="a" style="left:785px;top:493px;width:70px;height:19px;background:#3b3b3b;border:1px solid #4e4e4e;border-radius:2px"></div>
<div class="t" style="left:794px;top:497px;font-size:11px;color:#c0c0c0">0:00:01:14</div>

<!-- timeline panel -->
<div class="a" style="left:0;top:518px;width:1117px;height:292px;background:#434343"></div>
<div class="a" style="left:26px;top:526px;width:10px;height:10px;background:#b09a78"></div>
<div class="t" style="left:48px;top:524px;font-size:13px;color:#bcbcbc;letter-spacing:0.4px">连续的时钟</div>
<div class="a" style="left:170px;top:526px;width:10px;height:10px;background:#b09a78"></div>
<div class="t" style="left:192px;top:524px;font-size:13px;color:#bcbcbc;letter-spacing:0.4px">跳动的时钟</div>
<svg class="a" style="left:296px;top:527px" width="10" height="10"><path d="M2,2 L7,7 M7,2 L2,7" stroke="#a8a8a8" stroke-width="1.1"/></svg>
<div class="a" style="left:315px;top:526px;width:10px;height:10px;background:#b09a78"></div>
<div class="t" style="left:336px;top:524px;font-size:13px;color:#f0f0f0">合成<span style="font-size:12px">1</span></div>
<svg class="a" style="left:383px;top:527px" width="9" height="9"><rect y="1" width="9" height="1.3" fill="#ccc"/><rect y="4" width="9" height="1.3" fill="#ccc"/><rect y="7" width="9" height="1.3" fill="#ccc"/></svg>
<div class="a" style="left:299px;top:542px;width:93px;height:2px;background:#e8e8e8"></div>
<div class="t" style="left:24px;top:549px;font-size:15.3px;font-weight:bold;color:#3b9ef5">0:00:01:14</div>
<div class="t" style="left:11px;top:568px;font-family:'Liberation Mono',monospace;font-size:10.2px;color:#2a5e9e;letter-spacing:-0.2px">00044 (30.00 fps)</div>
<div class="a" style="left:122px;top:552px;width:416px;height:21px;background:#3b3b3b;border:1px solid #4f4f4f;border-radius:3px"></div>
<svg class="a" style="left:129px;top:556px" width="20" height="14"><circle cx="9" cy="5" r="3.8" stroke="#bdbdbd" stroke-width="1.2" fill="none"/><line x1="6.3" y1="7.8" x2="2" y2="12" stroke="#bdbdbd" stroke-width="1.3"/><polygon points="13,8 17,8 15,10.5" fill="#bdbdbd"/></svg>
<svg class="a" style="left:545px;top:552px" width="150" height="22" viewBox="545 552 150 22">
 <g fill="#c8c8c8">
  <rect x="552" y="559" width="4" height="1.2"/><rect x="555.8" y="557.8" width="4" height="3.4" rx="0.8"/><rect x="559.5" y="559" width="3.5" height="1.2"/><rect x="563" y="557.8" width="4" height="3.4" rx="0.8"/>
  <rect x="560" y="560" width="1.2" height="5.5"/><rect x="560" y="564.3" width="3" height="1.2"/><rect x="563" y="562.8" width="4" height="3.6" rx="0.8"/>
  <path d="M565.5,567.3 L569,567.3 L567.25,569.5 Z"/>
  <rect x="586" y="562" width="16" height="7.5" fill="#8e8e8e"/>
  <path d="M588.5,562 A5.5,5 0 0 1 599.5,562 Z"/>
  <rect x="593.3" y="560" width="1.6" height="8.5" fill="#dcdcdc"/><rect x="590.5" y="561" width="7.5" height="1.3" fill="#dcdcdc"/>
  <circle cx="591.5" cy="559.8" r="0.7" fill="#555"/><circle cx="596.5" cy="559.8" r="0.7" fill="#555"/>
 </g>
 <g fill="none" stroke="#c8c8c8" stroke-width="1.1">
  <rect x="616" y="556.5" width="11" height="10.5"/><path d="M613.5,559.5 V569 H623"/><path d="M615.5,560.5 V568" stroke-dasharray="1 1"/>
  <rect x="618.5" y="558.5" width="6" height="6.5"/><path d="M618.5,561.7 H624.5"/>
  <circle cx="646.3" cy="564.6" r="4.7" fill="#434343"/><circle cx="648.1" cy="562.8" r="4.7" fill="#434343"/><circle cx="650" cy="561" r="4.7" fill="#8e8e8e"/>
  <rect x="672.5" y="557.5" width="14.5" height="12"/><path d="M674.5,560.5 Q678.5,560.5 680,564 Q681.5,567.5 685.5,567.5"/>
 </g>
 <g fill="#c8c8c8"><rect x="675" y="555" width="1" height="2.5"/><rect x="678" y="555" width="1" height="2.5"/><rect x="681" y="555" width="1" height="2.5"/><rect x="684" y="555" width="1" height="2.5"/><rect x="670.5" y="560.5" width="2" height="1"/><rect x="670.5" y="564.5" width="2" height="1"/></g>
</svg>
<div class="a" style="left:0;top:581px;width:705px;height:1px;background:#1a1a1a"></div>
<div class="a" style="left:0;top:582px;width:705px;height:18px;background:#474747"></div>
<div class="a" style="left:0;top:600px;width:705px;height:1px;background:#111"></div>
<svg class="a" style="left:0;top:581px" width="705" height="19" viewBox="0 581 705 19">
 <path d="M6,591 Q11.5,585.5 17,591 Q11.5,596.5 6,591 Z" fill="#c2c2c2"/><circle cx="11.5" cy="591" r="1.8" fill="#474747"/>
 <path d="M21,588 H24 L28,585 V597 L24,594 H21 Z" fill="#c2c2c2"/><path d="M30,587.5 Q32.5,591 30,594.5 M31.5,585.5 Q35.5,591 31.5,596.5" stroke="#c2c2c2" stroke-width="1" fill="none"/>
 <circle cx="41" cy="591.5" r="3.6" fill="#c2c2c2"/>
 <path d="M52.5,590 V587.5 Q52.5,584.5 56,584.5 Q59.5,584.5 59.5,587.5 V590" stroke="#c2c2c2" stroke-width="1.4" fill="none"/><rect x="51" y="589.5" width="10" height="7.5" fill="#c2c2c2"/><rect x="55.3" y="591.5" width="1.4" height="3" fill="#474747"/>
 <rect x="68" y="585" width="1" height="13" fill="#2e2e2e"/>
 <path d="M82,585 H88 L94.5,591.5 L89,597 L82,590 Z" fill="#c2c2c2"/><circle cx="85" cy="588" r="1.2" fill="#474747"/>
 <rect x="100" y="585" width="1" height="13" fill="#2e2e2e"/>
 <rect x="133" y="585" width="1" height="13" fill="#2e2e2e"/>
 <rect x="387" y="585" width="1" height="13" fill="#2e2e2e"/>
 <rect x="524" y="585" width="1" height="13" fill="#2e2e2e"/>
 <rect x="641" y="585" width="1" height="13" fill="#2e2e2e"/>
 <rect x="689" y="585" width="1" height="13" fill="#2e2e2e"/>
</svg>
<div class="t" style="left:106px;top:587px;font-size:11px;color:#c8c8c8">#</div>
<div class="t" style="left:140px;top:584px;font-size:13px;color:#e0e0e0;letter-spacing:1px">源名称</div>
<div class="t" style="left:531px;top:584px;font-size:13px;color:#e0e0e0;letter-spacing:0.6px">父级和链接</div>
<div class="t" style="left:648px;top:584px;font-size:13px;color:#e0e0e0">键</div>
<svg class="a" style="left:390px;top:581px" width="130" height="19" viewBox="390 581 130 19">
 <g fill="#c2c2c2">
  <path d="M393.5,592 A4.75,5.2 0 0 1 403,592 Z" fill="#c8c8c8"/><circle cx="396.6" cy="589.6" r="0.9" fill="#474747"/><circle cx="399.9" cy="589.6" r="0.9" fill="#474747"/>
 <rect x="397.6" y="590" width="1.4" height="6" fill="#c8c8c8"/><rect x="392" y="593" width="4.6" height="1.1" fill="#c8c8c8"/><rect x="400" y="593" width="4.5" height="1.1" fill="#c8c8c8"/>
 <circle cx="413.5" cy="591.5" r="1.9" fill="none" stroke="#c8c8c8" stroke-width="1"/>
 <path d="M413.5,586 V588.5 M413.5,594.5 V597 M408,591.5 H410.5 M416.5,591.5 H419 M410,588 L411.3,589.3 M415.7,593.7 L417,595 M410,595 L411.3,593.7 M415.7,589.3 L417,588" stroke="#c8c8c8" stroke-width="0.9"/>
 <path d="M423.5,586 L432.5,595.5" stroke="#c8c8c8" stroke-width="1.5" stroke-dasharray="1.3 0.9"/>
 <text x="438" y="596" font-family="Liberation Serif" font-style="italic" font-size="13" fill="#c2c2c2">fx</text>
 <rect x="452.5" y="585.5" width="10" height="11" fill="none" stroke="#c2c2c2" stroke-width="1"/><rect x="454.5" y="587.5" width="6" height="7" fill="#c2c2c2"/><rect x="455.5" y="589" width="4" height="4" fill="#474747"/>
 <circle cx="474" cy="589.5" r="4.5" fill="#9a9a9a"/><circle cx="471.5" cy="592" r="4.5" fill="none" stroke="#c2c2c2"/><circle cx="470" cy="593.5" r="4" fill="none" stroke="#c2c2c2"/>
 <circle cx="489.5" cy="591" r="5" fill="#c2c2c2"/><path d="M493,587.5 L486,594.5 A5,5 0 0 0 493,587.5 Z" fill="#474747"/>
 <path d="M503,585.5 L508,588 V594 L503,596.5 L498,594 V588 Z M498,588 L503,590.5 L508,588 M503,590.5 V596.5" fill="none" stroke="#c2c2c2" stroke-width="1"/>
</svg>
<div class="a" style="left:1px;top:601px;width:704px;height:19px;background:#575757"></div>
<div class="a" style="left:1px;top:620px;width:704px;height:1px;background:#444"></div>
<div class="a" style="left:1px;top:621px;width:704px;height:19px;background:#4d4d4d"></div>
<div class="a" style="left:1px;top:640px;width:704px;height:1px;background:#444"></div>
<div class="a" style="left:5px;top:603px;width:13px;height:13px;background:#444"></div>
<svg class="a" style="left:5px;top:603px" width="13" height="13"><path d="M1.5,6.5 Q6.5,1 11.5,6.5 Q6.5,12 1.5,6.5 Z" fill="#d0d0d0"/><circle cx="6.5" cy="6.5" r="2" fill="#444"/></svg>
<div class="a" style="left:35px;top:603px;width:13px;height:13px;background:#444"></div>
<div class="a" style="left:50px;top:603px;width:13px;height:13px;background:#444"></div>
<svg class="a" style="left:73px;top:606px" width="11" height="8"><path d="M2,2.5 L5.5,6 L9,2.5" stroke="#c8c8c8" stroke-width="1.1" fill="none"/></svg>
<div class="a" style="left:86px;top:603px;width:15px;height:15px;background:#6b7fe0"></div>
<div class="t" style="left:107px;top:605px;font-family:'Liberation Serif',serif;font-weight:bold;font-size:12px;color:#d8d8d8">1</div>
<svg class="a" style="left:138px;top:603px" width="13" height="13"><polygon points="6.5,0.5 8.2,4.6 12.5,4.8 9.2,7.6 10.3,12 6.5,9.6 2.7,12 3.8,7.6 0.5,4.8 4.8,4.6" fill="#c2c2c2"/></svg>
<div class="t" style="left:159px;top:604px;font-size:12px;font-weight:bold;color:#dcdcdc;letter-spacing:0.6px">形状图层</div>
<div class="t" style="left:212px;top:605px;font-family:'Liberation Serif',serif;font-weight:bold;font-size:12px;color:#dcdcdc">3</div>
<svg class="a" style="left:112px;top:625px" width="52" height="14"><path d="M3.5,1.5 L7.5,5.5 L3.5,9.5" stroke="#c2c2c2" stroke-width="1.1" fill="none"/><circle cx="24" cy="7.5" r="5" fill="none" stroke="#3b9ef5" stroke-width="1.4"/><path d="M24,7.5 L26.5,5 M22,1 H26 M24,1 V2.5" stroke="#3b9ef5" stroke-width="1.2"/><path d="M37.5,1 V12.5 H48.5 M38.5,10 L41.5,5 L44,8.5 L47.5,4" stroke="#c2c2c2" stroke-width="1" fill="none"/></svg>
<div class="t" style="left:168px;top:624px;font-size:11px;color:#c8c8c8">旋转</div>
<svg class="a" style="left:390px;top:601px" width="250" height="40" viewBox="390 0 250 40">
 <rect x="392" y="3" width="13" height="13" fill="#444"/><rect x="407" y="3" width="13" height="13" fill="#444"/><rect x="422" y="3" width="13" height="13" fill="#444"/>
 <path d="M393.5,10 A4.75,5.2 0 0 1 403,10 Z" fill="#c8c8c8"/><circle cx="396.6" cy="7.6" r="0.9" fill="#444"/><circle cx="399.9" cy="7.6" r="0.9" fill="#444"/>
 <rect x="397.6" y="8" width="1.4" height="6" fill="#c8c8c8"/><rect x="392" y="11" width="4.6" height="1.1" fill="#c8c8c8"/><rect x="400" y="11" width="4.5" height="1.1" fill="#c8c8c8"/>
 <circle cx="413.5" cy="9.5" r="1.9" fill="none" stroke="#b0b0b0" stroke-width="1"/>
 <path d="M413.5,4.5 V6.8 M413.5,12.2 V14.5 M408.5,9.5 H410.8 M416.2,9.5 H418.5 M410.2,6.2 L411.4,7.4 M415.6,11.6 L416.8,12.8 M410.2,12.8 L411.4,11.6 M415.6,7.4 L416.8,6.2" stroke="#b0b0b0" stroke-width="0.9"/>
 <path d="M424,14.5 L433,4.5" stroke="#d8d8d8" stroke-width="1.3"/>
 <rect x="467" y="3" width="13" height="13" fill="#444"/><rect x="482" y="3" width="13" height="13" fill="#444"/><rect x="497" y="3" width="13" height="13" fill="#444"/>
 <path d="M536,4 Q530.5,4 530.5,9.5 Q530.5,14.5 535.5,14.5 Q540.5,14.5 540.5,10 Q540.5,6.5 536.5,6.5 Q533.5,6.5 533.5,9.5 Q533.5,12 536,12" stroke="#b4b4b4" stroke-width="1.2" fill="none"/>
 <rect x="548" y="2" width="89" height="16" fill="#3c3c3c"/>
 <path d="M626,8 L629.5,11.5 L633,8" stroke="#d0d0d0" stroke-width="1.2" fill="none"/>
 <path d="M549,24 Q543.5,24 543.5,29.5 Q543.5,34.5 548.5,34.5 Q553.5,34.5 553.5,30 Q553.5,26.5 549.5,26.5 Q546.5,26.5 546.5,29.5 Q546.5,32 549,32" stroke="#b4b4b4" stroke-width="1.2" fill="none"/>
</svg>
<div class="t" style="left:555px;top:605px;font-size:13px;color:#f0f0f0">无</div>
<svg class="a" style="left:645px;top:623px" width="45" height="14"><polygon points="4,7 10,3 10,11" fill="#c8c8c8"/><polygon points="22.5,2.8 26.7,7 22.5,11.2 18.3,7" fill="none" stroke="#c8c8c8" stroke-width="1.1"/><polygon points="35.5,3.5 40.5,7 35.5,10.5" fill="#6a6a6a"/></svg>
<div class="a" style="left:1px;top:641px;width:704px;height:19px;background:#575757"></div>
<div class="a" style="left:1px;top:660px;width:704px;height:1px;background:#444"></div>
<div class="a" style="left:1px;top:661px;width:704px;height:19px;background:#4d4d4d"></div>
<div class="a" style="left:1px;top:680px;width:704px;height:1px;background:#444"></div>
<div class="a" style="left:5px;top:643px;width:13px;height:13px;background:#444"></div>
<svg class="a" style="left:5px;top:643px" width="13" height="13"><path d="M1.5,6.5 Q6.5,1 11.5,6.5 Q6.5,12 1.5,6.5 Z" fill="#d0d0d0"/><circle cx="6.5" cy="6.5" r="2" fill="#444"/></svg>
<div class="a" style="left:35px;top:643px;width:13px;height:13px;background:#444"></div>
<div class="a" style="left:50px;top:643px;width:13px;height:13px;background:#444"></div>
<svg class="a" style="left:73px;top:646px" width="11" height="8"><path d="M2,2.5 L5.5,6 L9,2.5" stroke="#c8c8c8" stroke-width="1.1" fill="none"/></svg>
<div class="a" style="left:86px;top:643px;width:15px;height:15px;background:#6b7fe0"></div>
<div class="t" style="left:107px;top:645px;font-family:'Liberation Serif',serif;font-weight:bold;font-size:12px;color:#d8d8d8">2</div>
<svg class="a" style="left:138px;top:643px" width="13" height="13"><polygon points="6.5,0.5 8.2,4.6 12.5,4.8 9.2,7.6 10.3,12 6.5,9.6 2.7,12 3.8,7.6 0.5,4.8 4.8,4.6" fill="#c2c2c2"/></svg>
<div class="t" style="left:159px;top:644px;font-size:12px;font-weight:bold;color:#dcdcdc;letter-spacing:0.6px">形状图层</div>
<div class="t" style="left:212px;top:645px;font-family:'Liberation Serif',serif;font-weight:bold;font-size:12px;color:#dcdcdc">2</div>
<svg class="a" style="left:112px;top:665px" width="52" height="14"><path d="M3.5,1.5 L7.5,5.5 L3.5,9.5" stroke="#c2c2c2" stroke-width="1.1" fill="none"/><circle cx="24" cy="7.5" r="5" fill="none" stroke="#3b9ef5" stroke-width="1.4"/><path d="M24,7.5 L26.5,5 M22,1 H26 M24,1 V2.5" stroke="#3b9ef5" stroke-width="1.2"/><path d="M37.5,1 V12.5 H48.5 M38.5,10 L41.5,5 L44,8.5 L47.5,4" stroke="#c2c2c2" stroke-width="1" fill="none"/></svg>
<div class="t" style="left:168px;top:664px;font-size:11px;color:#c8c8c8">缩放</div>
<svg class="a" style="left:390px;top:641px" width="250" height="40" viewBox="390 0 250 40">
 <rect x="392" y="3" width="13" height="13" fill="#444"/><rect x="407" y="3" width="13" height="13" fill="#444"/><rect x="422" y="3" width="13" height="13" fill="#444"/>
 <path d="M393.5,10 A4.75,5.2 0 0 1 403,10 Z" fill="#c8c8c8"/><circle cx="396.6" cy="7.6" r="0.9" fill="#444"/><circle cx="399.9" cy="7.6" r="0.9" fill="#444"/>
 <rect x="397.6" y="8" width="1.4" height="6" fill="#c8c8c8"/><rect x="392" y="11" width="4.6" height="1.1" fill="#c8c8c8"/><rect x="400" y="11" width="4.5" height="1.1" fill="#c8c8c8"/>
 <circle cx="413.5" cy="9.5" r="1.9" fill="none" stroke="#b0b0b0" stroke-width="1"/>
 <path d="M413.5,4.5 V6.8 M413.5,12.2 V14.5 M408.5,9.5 H410.8 M416.2,9.5 H418.5 M410.2,6.2 L411.4,7.4 M415.6,11.6 L416.8,12.8 M410.2,12.8 L411.4,11.6 M415.6,7.4 L416.8,6.2" stroke="#b0b0b0" stroke-width="0.9"/>
 <path d="M424,14.5 L433,4.5" stroke="#d8d8d8" stroke-width="1.3"/>
 <rect x="467" y="3" width="13" height="13" fill="#444"/><rect x="482" y="3" width="13" height="13" fill="#444"/><rect x="497" y="3" width="13" height="13" fill="#444"/>
 <path d="M536,4 Q530.5,4 530.5,9.5 Q530.5,14.5 535.5,14.5 Q540.5,14.5 540.5,10 Q540.5,6.5 536.5,6.5 Q533.5,6.5 533.5,9.5 Q533.5,12 536,12" stroke="#b4b4b4" stroke-width="1.2" fill="none"/>
 <rect x="548" y="2" width="89" height="16" fill="#3c3c3c"/>
 <path d="M626,8 L629.5,11.5 L633,8" stroke="#d0d0d0" stroke-width="1.2" fill="none"/>
 <path d="M549,24 Q543.5,24 543.5,29.5 Q543.5,34.5 548.5,34.5 Q553.5,34.5 553.5,30 Q553.5,26.5 549.5,26.5 Q546.5,26.5 546.5,29.5 Q546.5,32 549,32" stroke="#b4b4b4" stroke-width="1.2" fill="none"/>
</svg>
<div class="t" style="left:555px;top:645px;font-size:13px;color:#f0f0f0">无</div>
<svg class="a" style="left:645px;top:663px" width="45" height="14"><polygon points="4,7 10,3 10,11" fill="#c8c8c8"/><polygon points="22.5,2.8 26.7,7 22.5,11.2 18.3,7" fill="none" stroke="#c8c8c8" stroke-width="1.1"/><polygon points="35.5,3.5 40.5,7 35.5,10.5" fill="#6a6a6a"/></svg>
<div class="a" style="left:1px;top:681px;width:704px;height:19px;background:#575757"></div>
<div class="a" style="left:1px;top:700px;width:704px;height:1px;background:#444"></div>
<div class="a" style="left:1px;top:701px;width:704px;height:19px;background:#4d4d4d"></div>
<div class="a" style="left:1px;top:720px;width:704px;height:1px;background:#444"></div>
<div class="a" style="left:5px;top:683px;width:13px;height:13px;background:#444"></div>
<svg class="a" style="left:5px;top:683px" width="13" height="13"><path d="M1.5,6.5 Q6.5,1 11.5,6.5 Q6.5,12 1.5,6.5 Z" fill="#d0d0d0"/><circle cx="6.5" cy="6.5" r="2" fill="#444"/></svg>
<div class="a" style="left:35px;top:683px;width:13px;height:13px;background:#444"></div>
<div class="a" style="left:50px;top:683px;width:13px;height:13px;background:#444"></div>
<svg class="a" style="left:73px;top:686px" width="11" height="8"><path d="M2,2.5 L5.5,6 L9,2.5" stroke="#c8c8c8" stroke-width="1.1" fill="none"/></svg>
<div class="a" style="left:86px;top:683px;width:15px;height:15px;background:#6b7fe0"></div>
<div class="t" style="left:107px;top:685px;font-family:'Liberation Serif',serif;font-weight:bold;font-size:12px;color:#d8d8d8">3</div>
<svg class="a" style="left:138px;top:683px" width="13" height="13"><polygon points="6.5,0.5 8.2,4.6 12.5,4.8 9.2,7.6 10.3,12 6.5,9.6 2.7,12 3.8,7.6 0.5,4.8 4.8,4.6" fill="#c2c2c2"/></svg>
<div class="t" style="left:159px;top:684px;font-size:12px;font-weight:bold;color:#dcdcdc;letter-spacing:0.6px">形状图层</div>
<div class="t" style="left:212px;top:685px;font-family:'Liberation Serif',serif;font-weight:bold;font-size:12px;color:#dcdcdc">1</div>
<svg class="a" style="left:112px;top:705px" width="52" height="14"><path d="M3.5,1.5 L7.5,5.5 L3.5,9.5" stroke="#c2c2c2" stroke-width="1.1" fill="none"/><circle cx="24" cy="7.5" r="5" fill="none" stroke="#3b9ef5" stroke-width="1.4"/><path d="M24,7.5 L26.5,5 M22,1 H26 M24,1 V2.5" stroke="#3b9ef5" stroke-width="1.2"/><path d="M37.5,1 V12.5 H48.5 M38.5,10 L41.5,5 L44,8.5 L47.5,4" stroke="#c2c2c2" stroke-width="1" fill="none"/></svg>
<div class="t" style="left:168px;top:704px;font-size:11px;color:#c8c8c8">位置</div>
<svg class="a" style="left:390px;top:681px" width="250" height="40" viewBox="390 0 250 40">
 <rect x="392" y="3" width="13" height="13" fill="#444"/><rect x="407" y="3" width="13" height="13" fill="#444"/><rect x="422" y="3" width="13" height="13" fill="#444"/>
 <path d="M393.5,10 A4.75,5.2 0 0 1 403,10 Z" fill="#c8c8c8"/><circle cx="396.6" cy="7.6" r="0.9" fill="#444"/><circle cx="399.9" cy="7.6" r="0.9" fill="#444"/>
 <rect x="397.6" y="8" width="1.4" height="6" fill="#c8c8c8"/><rect x="392" y="11" width="4.6" height="1.1" fill="#c8c8c8"/><rect x="400" y="11" width="4.5" height="1.1" fill="#c8c8c8"/>
 <circle cx="413.5" cy="9.5" r="1.9" fill="none" stroke="#b0b0b0" stroke-width="1"/>
 <path d="M413.5,4.5 V6.8 M413.5,12.2 V14.5 M408.5,9.5 H410.8 M416.2,9.5 H418.5 M410.2,6.2 L411.4,7.4 M415.6,11.6 L416.8,12.8 M410.2,12.8 L411.4,11.6 M415.6,7.4 L416.8,6.2" stroke="#b0b0b0" stroke-width="0.9"/>
 <path d="M424,14.5 L433,4.5" stroke="#d8d8d8" stroke-width="1.3"/>
 <rect x="467" y="3" width="13" height="13" fill="#444"/><rect x="482" y="3" width="13" height="13" fill="#444"/><rect x="497" y="3" width="13" height="13" fill="#444"/>
 <path d="M536,4 Q530.5,4 530.5,9.5 Q530.5,14.5 535.5,14.5 Q540.5,14.5 540.5,10 Q540.5,6.5 536.5,6.5 Q533.5,6.5 533.5,9.5 Q533.5,12 536,12" stroke="#b4b4b4" stroke-width="1.2" fill="none"/>
 <rect x="548" y="2" width="89" height="16" fill="#3c3c3c"/>
 <path d="M626,8 L629.5,11.5 L633,8" stroke="#d0d0d0" stroke-width="1.2" fill="none"/>
 <path d="M549,24 Q543.5,24 543.5,29.5 Q543.5,34.5 548.5,34.5 Q553.5,34.5 553.5,30 Q553.5,26.5 549.5,26.5 Q546.5,26.5 546.5,29.5 Q546.5,32 549,32" stroke="#b4b4b4" stroke-width="1.2" fill="none"/>
</svg>
<div class="t" style="left:555px;top:685px;font-size:13px;color:#f0f0f0">无</div>
<svg class="a" style="left:645px;top:703px" width="45" height="14"><polygon points="4,7 10,3 10,11" fill="#c8c8c8"/><polygon points="22.5,2.8 26.7,7 22.5,11.2 18.3,7" fill="none" stroke="#c8c8c8" stroke-width="1.1"/><polygon points="35.5,3.5 40.5,7 35.5,10.5" fill="#6a6a6a"/></svg>
<div class="t" style="left:393px;top:627px;font-family:'Liberation Mono',monospace;font-size:10px;color:#e8683a;letter-spacing:-0.7px">0<span style="color:#5aa0e0">x</span> +29.5°</div>
<div class="a" style="left:391px;top:663px;width:15px;height:14px;background:#3f3f3f"></div>
<svg class="a" style="left:391px;top:663px" width="15" height="14"><rect x="2" y="4.5" width="7" height="5" rx="2.5" fill="none" stroke="#c2c2c2" stroke-width="1.2"/><rect x="6" y="4.5" width="7" height="5" rx="2.5" fill="none" stroke="#c2c2c2" stroke-width="1.2"/></svg>
<div class="t" style="left:410px;top:667px;font-family:'Liberation Mono',monospace;font-size:10px;color:#e8683a;letter-spacing:-0.7px">158.9, 158.9<span style="color:#5aa0e0">%</span></div>
<div class="t" style="left:393px;top:707px;font-family:'Liberation Mono',monospace;font-size:10px;color:#e8683a;letter-spacing:-0.7px">476.0, 723.9</div>
<div class="a" style="left:704px;top:545px;width:1px;height:265px;background:#262626"></div>
<div class="a" style="left:705px;top:720px;width:412px;height:90px;background:#535353"></div>
<div class="a" style="left:705px;top:601px;width:7px;height:209px;background:#4c4c4c"></div>
<div class="a" style="left:705px;top:551px;width:412px;height:10px;background:#5a5750"></div>
<div class="a" style="left:708px;top:551px;width:265px;height:10px;background:#8a8a8a;border:1px solid #1e1e1e"></div>
<div class="a" style="left:892px;top:552px;width:1px;height:8px;background:#3b9ef5"></div>
<svg class="a" style="left:704px;top:550px" width="280" height="12"><path d="M7,1 H3 Q1,1 1,4 V8 Q1,11 3,11 H7 Z" fill="#3b9ef5"/><path d="M269,1 H273 Q276,1 276,6 Q276,11 273,11 H269 Z" fill="#3b9ef5"/></svg>
<div class="a" style="left:705px;top:561px;width:412px;height:20px;background:#434343"></div>
<div class="a" style="left:705px;top:580px;width:412px;height:1px;background:#1a1a1a"></div>
<div class="a" style="left:705px;top:581px;width:412px;height:16px;background:#868686"></div>
<svg class="a" style="left:705px;top:580px" width="8" height="17"><path d="M7,1 H4 Q0.5,1 0.5,5 V12 Q0.5,16 4,16 H7 Z" fill="#3b9ef5"/></svg>
<div class="a" style="left:705px;top:596px;width:412px;height:1px;background:#1a1a1a"></div>
<div class="a" style="left:712px;top:597px;width:405px;height:3px;background:#19c219"></div>
<div class="a" style="left:705px;top:600px;width:412px;height:1px;background:#111"></div>
<div class="a" style="left:712px;top:574px;width:1px;height:6px;background:#c8c8c8"></div>
<div class="a" style="left:795px;top:574px;width:1px;height:6px;background:#c8c8c8"></div>
<div class="a" style="left:877px;top:574px;width:1px;height:6px;background:#c8c8c8"></div>
<div class="a" style="left:959px;top:574px;width:1px;height:6px;background:#c8c8c8"></div>
<div class="a" style="left:1042px;top:574px;width:1px;height:6px;background:#c8c8c8"></div>
<div class="t" style="left:706px;top:564px;font-family:'Liberation Serif',serif;font-size:11.5px;color:#d0d0d0;letter-spacing:0.8px">:00f</div>
<div class="t" style="left:785px;top:564px;font-family:'Liberation Serif',serif;font-size:11.5px;color:#d0d0d0;letter-spacing:0.8px">10f</div>
<div class="t" style="left:866px;top:564px;font-family:'Liberation Serif',serif;font-size:11.5px;color:#d0d0d0;letter-spacing:0.8px">20f</div>
<div class="t" style="left:940px;top:564px;font-family:'Liberation Serif',serif;font-size:11.5px;color:#d0d0d0;letter-spacing:0.8px">01:00f</div>
<div class="t" style="left:1032px;top:564px;font-family:'Liberation Serif',serif;font-size:11.5px;color:#d0d0d0;letter-spacing:0.8px">10f</div>
<div class="t" style="left:1112px;top:564px;font-family:'Liberation Serif',serif;font-size:11.5px;color:#d0d0d0;letter-spacing:0.8px">20f</div>
<div class="a" style="left:712px;top:601px;width:405px;height:19px;background:#5a5a5a"></div>
<div class="a" style="left:712px;top:603px;width:405px;height:16px;background:#4a5cb8;border-top:1px solid #6a7ad0;border-left:1px solid #6a7ad0"></div>
<div class="a" style="left:705px;top:620px;width:412px;height:1px;background:#4a4a4a"></div>
<div class="a" style="left:712px;top:621px;width:405px;height:19px;background:#5c5c5c"></div>
<div class="a" style="left:705px;top:640px;width:412px;height:1px;background:#4a4a4a"></div>
<svg class="a" style="left:706px;top:623px" width="180" height="14"><polygon points="6.5,2 11,6.5 6.5,11 2,6.5" fill="#c8c8c8"/><polygon points="6.5,2 6.5,11 2,6.5" fill="#9a9a9a"/><polygon points="171,2 175.5,6.5 171,11 166.5,6.5" fill="#9a9a9a"/><polygon points="171,2 171,11 166.5,6.5" fill="#d0d0d0"/></svg>
<div class="a" style="left:712px;top:641px;width:405px;height:19px;background:#5a5a5a"></div>
<div class="a" style="left:712px;top:643px;width:405px;height:16px;background:#4a5cb8;border-top:1px solid #6a7ad0;border-left:1px solid #6a7ad0"></div>
<div class="a" style="left:705px;top:660px;width:412px;height:1px;background:#4a4a4a"></div>
<div class="a" style="left:712px;top:661px;width:405px;height:19px;background:#5c5c5c"></div>
<div class="a" style="left:705px;top:680px;width:412px;height:1px;background:#4a4a4a"></div>
<svg class="a" style="left:706px;top:663px" width="180" height="14"><polygon points="6.5,2 11,6.5 6.5,11 2,6.5" fill="#c8c8c8"/><polygon points="6.5,2 6.5,11 2,6.5" fill="#9a9a9a"/><polygon points="171,2 175.5,6.5 171,11 166.5,6.5" fill="#9a9a9a"/><polygon points="171,2 171,11 166.5,6.5" fill="#d0d0d0"/></svg>
<div class="a" style="left:712px;top:681px;width:405px;height:19px;background:#5a5a5a"></div>
<div class="a" style="left:712px;top:683px;width:405px;height:16px;background:#4a5cb8;border-top:1px solid #6a7ad0;border-left:1px solid #6a7ad0"></div>
<div class="a" style="left:705px;top:700px;width:412px;height:1px;background:#4a4a4a"></div>
<div class="a" style="left:712px;top:701px;width:405px;height:19px;background:#5c5c5c"></div>
<div class="a" style="left:705px;top:720px;width:412px;height:1px;background:#4a4a4a"></div>
<svg class="a" style="left:706px;top:703px" width="180" height="14"><polygon points="6.5,2 11,6.5 6.5,11 2,6.5" fill="#c8c8c8"/><polygon points="6.5,2 6.5,11 2,6.5" fill="#9a9a9a"/><polygon points="171,2 175.5,6.5 171,11 166.5,6.5" fill="#9a9a9a"/><polygon points="171,2 171,11 166.5,6.5" fill="#d0d0d0"/></svg>
<div class="a" style="left:1074px;top:578px;width:1px;height:232px;background:#3b9ef5"></div>
<svg class="a" style="left:1068px;top:565px" width="13" height="14"><path d="M1,1 H12 V8 L6.5,13.5 L1,8 Z" fill="#3b9ef5"/><path d="M5,3.5 H8 M6.5,3.5 V8" stroke="#1a3a6a" stroke-width="0.8"/></svg>
<!-- status bar -->
<div class="a" style="left:0;top:810px;width:1117px;height:1px;background:#2e2e2e"></div>
<div class="a" style="left:0;top:811px;width:1117px;height:15px;background:#3c3c3c"></div>
<div class="a" style="left:6px;top:811px;width:15px;height:15px;background:#333"></div>
<svg class="a" style="left:0;top:811px" width="90" height="15"><g fill="none" stroke="#3b9ef5" stroke-width="1.1"><rect x="8.5" y="2.5" width="7" height="7"/><rect x="10.5" y="4.5" width="7" height="7"/><rect x="12.5" y="6.5" width="7" height="7"/></g><g fill="none" stroke="#c2c2c2" stroke-width="1.1"><circle cx="31" cy="6" r="4"/><rect x="32.5" y="7.5" width="5.5" height="5.5" fill="#c2c2c2"/></g><path d="M47,2 H50 L51,6 L50,11 H47 L48,6 Z M52,2 H55 L54,6 L55,11 H52 L53,6 Z" fill="#c2c2c2"/><path d="M65,11 Q65,4 70,4 Q75,4 75,11 Z" fill="#c2c2c2"/><path d="M74,6 L77,3.5 M76,8 L78,5" stroke="#c2c2c2"/></svg>
<div class="t" style="left:88px;top:812px;font-size:13px;color:#d0d0d0">帧渲染时间</div>
<div class="t" style="left:162px;top:812px;font-size:13px;color:#5ac8e0"><span style="font-size:11px">0</span>毫秒</div>
<div class="a" style="left:390px;top:811px;width:133px;height:15px;background:#383838;border:1px solid #4c4c4c;border-bottom:none"></div>
<div class="t" style="left:419px;top:813px;font-size:12px;color:#c8c8c8">切换开关 <span style="font-size:11px">/</span>模式</div>
<svg class="a" style="left:705px;top:811px" width="412" height="15" viewBox="705 811 412 15"><path d="M710,821 L713,818 L715,819.5 L717,817.5 L720,821 Z" fill="#c2c2c2"/><rect x="736" y="818.5" width="43" height="1.5" fill="#666"/><circle cx="760" cy="819.5" r="4" fill="#3c3c3c" stroke="#c2c2c2" stroke-width="1.5"/><path d="M791,821 L795,816.5 L797,818 L801,813.5 L807,821 Z" fill="#c2c2c2"/><path d="M796,821 L800,816.5" stroke="#3c3c3c"/><rect x="813" y="811" width="210" height="15" rx="7.5" fill="#4b4b4b"/></svg>
</body></html>
